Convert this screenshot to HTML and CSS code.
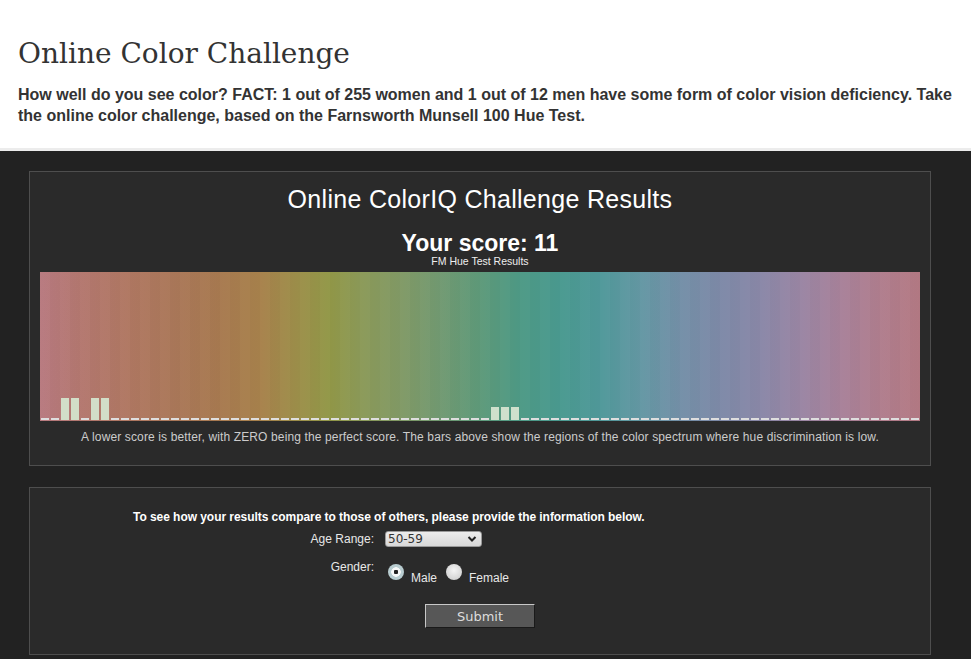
FILE: index.html
```html
<!DOCTYPE html>
<html>
<head>
<meta charset="utf-8">
<title>Online Color Challenge</title>
<link rel="stylesheet" href="styles.css">
</head>
<body>
<header class="top">
  <h1 class="title">Online Color Challenge</h1>
  <p class="intro">How well do you see color? FACT: 1 out of 255 women and 1 out of 12 men have some form of color vision deficiency. Take the online color challenge, based on the Farnsworth Munsell 100 Hue Test.</p>
</header>
<main class="main">
  <section class="panel results">
    <h2 class="res-title">Online ColorIQ Challenge Results</h2>
    <div class="score">Your score: 11</div>
    <div class="sub">FM Hue Test Results</div>
    <div class="spectrum">
      <div class="bars">
        <i></i><i></i><i class="t"></i><i class="t"></i><i></i><i class="t"></i><i class="t"></i><i></i><i></i><i></i>
        <i></i><i></i><i></i><i></i><i></i><i></i><i></i><i></i><i></i><i></i>
        <i></i><i></i><i></i><i></i><i></i><i></i><i></i><i></i><i></i><i></i>
        <i></i><i></i><i></i><i></i><i></i><i></i><i></i><i></i><i></i><i></i>
        <i></i><i></i><i></i><i></i><i></i><i class="m"></i><i class="m"></i><i class="m"></i><i></i><i></i>
        <i></i><i></i><i></i><i></i><i></i><i></i><i></i><i></i><i></i><i></i>
        <i></i><i></i><i></i><i></i><i></i><i></i><i></i><i></i><i></i><i></i>
        <i></i><i></i><i></i><i></i><i></i><i></i><i></i><i></i><i></i><i></i>
        <i></i><i></i><i></i><i></i><i></i><i></i><i></i><i></i>
      </div>
    </div>
    <p class="caption">A lower score is better, with ZERO being the perfect score. The bars above show the regions of the color spectrum where hue discrimination is low.</p>
  </section>
  <section class="panel compare">
    <form class="form">
      <p class="form-head">To see how your results compare to those of others, please provide the information below.</p>
      <div class="row age">
        <label class="lbl" for="age">Age Range:</label>
        <span class="sel-wrap">
          <select id="age" class="sel">
            <option>50-59</option>
          </select>
          <svg class="chev" width="10" height="8" viewBox="0 0 10 8"><path d="M1.5 2 L5 5.5 L8.5 2" fill="none" stroke="#222" stroke-width="2"/></svg>
        </span>
      </div>
      <div class="row gender">
        <span class="lbl">Gender:</span>
        <span class="radios">
          <label class="opt"><input type="radio" name="g" class="radio" checked> Male</label>
          <label class="opt"><input type="radio" name="g" class="radio"> Female</label>
        </span>
      </div>
    </form>
    <div class="submit-row"><button type="button" class="submit">Submit</button></div>
  </section>
</main>
</body>
</html>
```
FILE: styles.css
```css
html, body {
  margin: 0;
  padding: 0;
}
body {
  background: #222222;
  font-family: "Liberation Sans", Arial, sans-serif;
}
.top {
  background: #ffffff;
  height: 148px;
  border-bottom: 3px solid #ececec;
  padding: 0 18px;
  box-sizing: content-box;
  overflow: hidden;
}
.title {
  margin: 0;
  padding-top: 37px;
  font-family: "DejaVu Serif", serif;
  font-weight: normal;
  font-size: 28px;
  line-height: 33px;
  color: #333333;
}
.intro {
  margin: 14px 0 0;
  font-weight: bold;
  font-size: 16px;
  line-height: 21px;
  color: #333333;
}
.main {
  padding: 20px 40px 0 29px;
}
.panel {
  background: #2a2a2a;
  border: 1px solid #4e4e4e;
  box-sizing: border-box;
  width: 902px;
}
.results {
  height: 295px;
  padding: 13px 10px 0;
  text-align: center;
  color: #ffffff;
}
.res-title {
  margin: 0;
  font-weight: normal;
  font-size: 25px;
  line-height: 28px;
  letter-spacing: 0.3px;
}
.score {
  margin-top: 17px;
  font-weight: bold;
  font-size: 23px;
  line-height: 26px;
}
.sub {
  font-size: 10.5px;
  line-height: 11px;
  color: #eeeeee;
}
.spectrum {
  margin-top: 5px;
  height: 149px;
  width: 880px;
  background:
    repeating-linear-gradient(90deg, rgba(255,255,255,0.012) 0 10px, rgba(0,0,0,0.015) 10px 20px),
    linear-gradient(90deg,
      #b87a80 0px, #b47870 40px, #b07862 90px, #aa7858 140px, #a87a50 180px,
      #a8824c 220px, #9c904a 260px, #929848 290px, #8c9a58 320px, #829a66 360px,
      #729a72 400px, #5e9a7a 440px, #4e9a86 480px, #4a9a90 520px, #50999a 560px,
      #6498a4 600px, #7490a8 640px, #7e8aa8 680px, #8a88a8 720px, #9a86a4 760px,
      #a8829a 800px, #b07e8e 840px, #b47a84 880px);
  display: flex;
  align-items: flex-end;
}
.bars {
  display: flex;
  align-items: flex-end;
  height: 100%;
  width: 880px;
}
.bars i {
  display: block;
  width: 8px;
  height: 2px;
  margin: 0 1px 1px;
  background: #dedede;
}
.bars i.t {
  height: 22px;
  background: #d2dec8;
}
.bars i.m {
  height: 13px;
  background: #cfe0cc;
}
.caption {
  margin: 9px 0 0;
  font-size: 12px;
  line-height: 14px;
  color: #cccccc;
  letter-spacing: 0.13px;
}
.compare {
  margin-top: 21px;
  height: 168px;
  padding-top: 22px;
  color: #eeeeee;
}
.form {
  margin-left: 103px;
  width: 530px;
}
.form-head {
  margin: 0;
  font-weight: bold;
  font-size: 12px;
  line-height: 14px;
  color: #ffffff;
  letter-spacing: -0.05px;
}
.row {
  display: grid;
  grid-template-columns: 241px auto;
  column-gap: 11px;
  align-items: start;
  font-size: 12px;
  line-height: 14px;
}
.age {
  margin-top: 8px;
}
.gender {
  margin-top: 13px;
}
.lbl {
  text-align: right;
  color: #e8e8e8;
}
.sel-wrap {
  position: relative;
  display: inline-block;
  width: 97px;
  height: 16px;
  margin-top: -1px;
}
.sel {
  appearance: none;
  -webkit-appearance: none;
  width: 97px;
  height: 16px;
  border: 1px solid #999;
  border-radius: 3px;
  background: linear-gradient(#ececec, #d8d8d8);
  font-family: "DejaVu Sans", sans-serif;
  font-size: 12px;
  line-height: 14px;
  padding: 0 0 0 2px;
  color: #333;
  margin: 0;
}
.chev {
  position: absolute;
  right: 5px;
  top: 4px;
  pointer-events: none;
}
.radios {
  display: flex;
  align-items: flex-end;
  gap: 9px;
  padding-top: 4px;
  margin-left: 3px;
}
.opt {
  display: flex;
  align-items: flex-end;
  gap: 7px;
  color: #e8e8e8;
  font-size: 12px;
  line-height: 12px;
}
.radio {
  appearance: none;
  -webkit-appearance: none;
  width: 16px;
  height: 16px;
  margin: 0 0 4px;
  border-radius: 50%;
  background: radial-gradient(circle at 50% 40%, #f4f4f4, #c8c8c8);
  border: none;
}
.radio:checked {
  background:
    radial-gradient(circle, #222 0 2px, #f6f8f8 2.5px 4.5px, #b8ccd0 5px 8px);
}
.submit-row {
  display: flex;
  justify-content: center;
  margin-top: 20px;
}
.submit {
  width: 110px;
  height: 24px;
  background: #575757;
  color: #dddddd;
  font-family: "DejaVu Sans", sans-serif;
  font-size: 13px;
  border: 1px solid;
  border-color: #c8c8c8 #1a1a1a #1a1a1a #c8c8c8;
  padding: 0;
}
```
